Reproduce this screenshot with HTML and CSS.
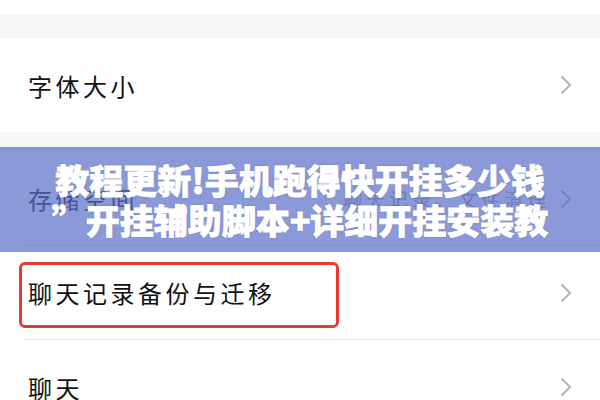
FILE: index.html
```html
<!DOCTYPE html>
<html>
<head>
<meta charset="utf-8">
<title>设置</title>
<link rel="stylesheet" href="styles.css">
</head>
<body>
<div class="screen">
  <div class="top-strip"></div>

  <div class="group first">
    <div class="cell">
      <span class="label">字体大小</span>
      <svg class="arrow" width="12" height="20" viewBox="0 0 12 20"><polyline points="1.5,1.5 10,10 1.5,18.5" /></svg>
    </div>
  </div>

  <div class="group second">
    <div class="cell">
      <span class="label">存储空间</span>
      <span class="detail">聊天记录、文件清理</span>
      <svg class="arrow" width="12" height="20" viewBox="0 0 12 20"><polyline points="1.5,1.5 10,10 1.5,18.5" /></svg>
    </div>
    <div class="cell marked">
      <span class="label">聊天记录备份与迁移</span>
      <svg class="arrow" width="12" height="20" viewBox="0 0 12 20"><polyline points="1.5,1.5 10,10 1.5,18.5" /></svg>
      <div class="mark"></div>
    </div>
    <div class="cell">
      <span class="label">聊天</span>
      <svg class="arrow" width="12" height="20" viewBox="0 0 12 20"><polyline points="1.5,1.5 10,10 1.5,18.5" /></svg>
    </div>
  </div>

  <div class="banner">
    <div class="banner-title">教程更新!手机跑得快开挂多少钱<br>”开挂辅助脚本+详细开挂安装教程</div>
  </div>
</div>
</body>
</html>
```

FILE: styles.css
```css
body {
  margin: 0px;
  padding: 0px;
  background: #f5f6f8;
  font-family: "Noto Sans CJK SC", "Noto Sans", sans-serif;
  overflow: hidden;
}

.screen {
  position: relative;
  height: 400px;
  overflow: hidden;
}

.top-strip {
  height: 15px;
  background: #fff;
}

.group {
  background: #fff;
}
.group.first {
  margin-top: 23px;
}
.group.second {
  margin-top: 20px;
}

.cell {
  position: relative;
  box-sizing: border-box;
  height: 94px;
  margin-left: 23px;
  padding: 0 28px 0 5px;
  display: flex;
  align-items: center;
  border-bottom: 1px solid #e7e7e7;
}
.group .cell:last-child {
  border-bottom: none;
}

.label {
  flex: 1;
  font-size: 24px;
  letter-spacing: 3.5px;
  color: #111;
}

.detail {
  font-size: 19px;
  letter-spacing: 4px;
  color: #9a9a9a;
  margin-right: 10px;
}

.arrow {
  display: block;
}
.arrow polyline {
  fill: none;
  stroke: #b3b3b3;
  stroke-width: 2;
}

/* red annotation frame */
.mark {
  position: absolute;
  left: -4px;
  top: 16px;
  width: 320px;
  height: 66px;
  box-sizing: border-box;
  border: 3px solid #e83a35;
  border-radius: 6px;
}

.banner {
  position: absolute;
  top: 147px;
  left: 0;
  right: 0;
  height: 105px;
  background: rgba(90, 110, 200, 0.7);
}
.banner-title {
  width: 520px;
  height: 80px;
  margin: 13px auto 0;
  overflow: hidden;
  text-align: center;
  color: #fff;
  font-size: 34px;
  font-weight: 900;
  line-height: 40px;
  -webkit-text-stroke: 0.8px #fff;
  text-shadow: 0 0 2px rgba(40, 40, 60, 0.35);
}
```
